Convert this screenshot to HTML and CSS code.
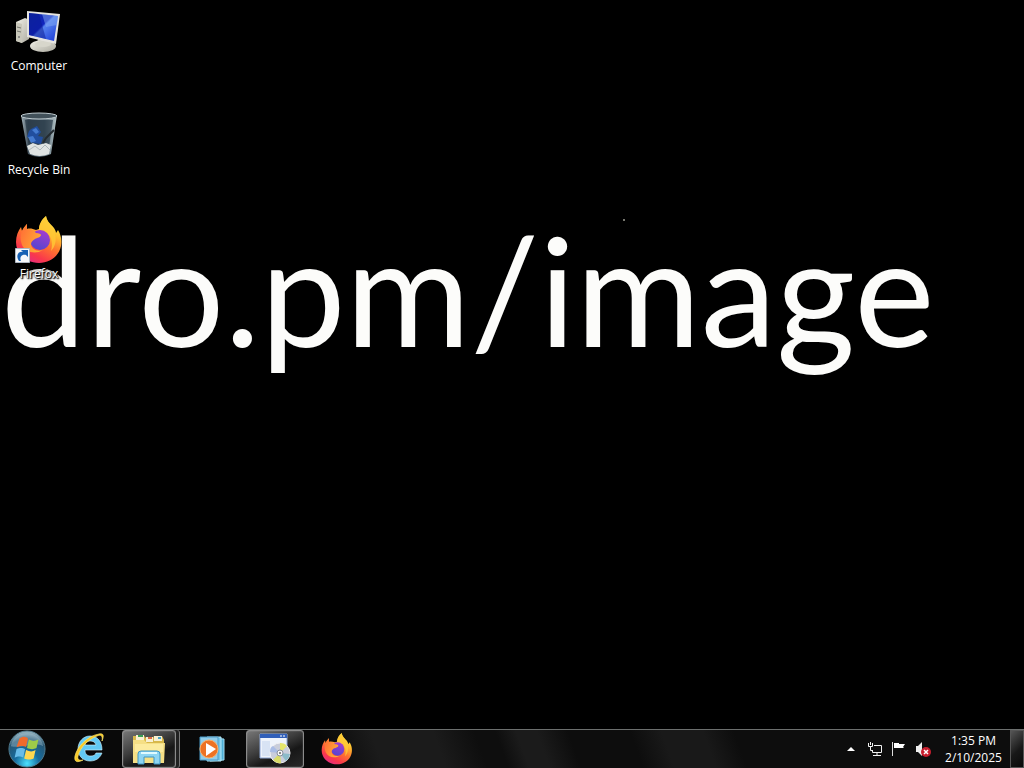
FILE: index.html
```html
<!DOCTYPE html>
<html lang="en">
<head>
<meta charset="utf-8">
<meta name="viewport" content="width=device-width, initial-scale=1">
<title>Desktop</title>
<link rel="stylesheet" href="styles.css">
</head>
<body>
<svg class="defs" aria-hidden="true">
  <defs>
    <linearGradient id="ffBody" x1=".8" y1="0" x2=".25" y2="1">
      <stop offset="0" stop-color="#fff44b"/><stop offset=".3" stop-color="#ffbd2e"/><stop offset=".55" stop-color="#ff7130"/><stop offset=".8" stop-color="#f9384c"/><stop offset="1" stop-color="#e42a85"/>
    </linearGradient>
    <linearGradient id="ffGlobe" x1=".7" y1="0" x2=".3" y2="1">
      <stop offset="0" stop-color="#a53bd0"/><stop offset="1" stop-color="#5246cf"/>
    </linearGradient>
    <linearGradient id="ffHead" x1="0" y1="0" x2="1" y2=".5">
      <stop offset="0" stop-color="#ff6a36"/><stop offset="1" stop-color="#ffad35"/>
    </linearGradient>
    <symbol id="firefox" viewBox="0 0 48 48">
      <path fill="url(#ffBody)" d="M31 0c1 6 5 8 8 12 1 2 2 3 2 5l2-3c3 5 4 10 3 16-2 10-11 17-22 17C11 47 1 38 1 26c0-6 2-11 5-15l1 4c1-3 3-5 5-7v5c3-1 6 0 9 1l3-1C24 8 27 3 31 0z"/>
      <path fill="#ffc936" d="M31 0c1 6 6 10 8 15 3 7 2 15-3 20 2-7 1-14-4-18-3-2-6-3-8-3 0-6 4-10 7-14z" opacity=".8"/>
      <circle cx="25" cy="24" r="10" fill="url(#ffGlobe)"/>
      <path fill="url(#ffHead)" d="M7 15l5-7v6c4-1 7 0 9 3 3 0 5 1 5 2 0 2-4 3-6 4-2 1-4 3-4 5 0 5 6 8 12 6-8 5-18 2-21-5-2-5-2-10 0-14z"/>
    </symbol>
  </defs>
</svg>

<main class="desktop">
  <div class="wallpaper" aria-hidden="true">
    <p class="wallpaper-text">dro.pm/image</p>
    <span class="speck"></span>
  </div>

  <nav class="shortcuts" aria-label="Desktop shortcuts">
    <button class="shortcut" type="button">
      <svg class="shortcut-icon" viewBox="0 0 48 48" aria-hidden="true">
        <defs>
          <linearGradient id="screen" x1="0" y1="0" x2="1" y2="1"><stop offset="0" stop-color="#102ca8"/><stop offset=".45" stop-color="#1024bd"/><stop offset=".5" stop-color="#5784ef"/><stop offset="1" stop-color="#1735d4"/></linearGradient>
          <linearGradient id="plastic" x1="0" x2="1" y2="1"><stop offset="0" stop-color="#f3f2e9"/><stop offset="1" stop-color="#aaa99e"/></linearGradient>
        </defs>
        <path d="M1 14l9-4 5 2-1 19-7 4-6-2z" fill="url(#plastic)"/>
        <path d="M1 14l6 2v19l-6-2z" fill="#c8c7ba"/>
        <path d="M2 19l4 1M2 23l4 1" stroke="#75766f"/>
        <circle cx="4" cy="29" r="1" fill="#777"/>
        <path d="M23 30h9l1 8H22z" fill="#b9b8ac"/>
        <ellipse cx="28" cy="38" rx="13" ry="6" fill="url(#plastic)"/>
        <ellipse cx="28" cy="36" rx="8" ry="3" fill="#d7d6cb"/>
        <path d="M12 3l33 3-4 30-29-7z" fill="#e5e4df"/>
        <path d="M14 5l29 3-4 25-25-6z" fill="url(#screen)"/>
        <path d="M14 5l10 1 7 25-17-4z" fill="#071790" opacity=".5"/>
        <path d="M27 6l16 2-1 9-11 2z" fill="#82aaf4" opacity=".5"/>
      </svg>
      <span class="shortcut-label">Computer</span>
    </button>
    <button class="shortcut" type="button">
      <svg class="shortcut-icon" viewBox="0 0 48 48" aria-hidden="true">
        <defs><linearGradient id="glass"><stop offset="0" stop-color="#a7b7be"/><stop offset=".2" stop-color="#42515d"/><stop offset=".65" stop-color="#546772"/><stop offset="1" stop-color="#b7c6ca"/></linearGradient></defs>
        <path d="M6 3h36l-6 39q-12 6-23 0z" fill="url(#glass)"/>
        <path d="M10 8h28l-4 27H14z" fill="#243443" opacity=".7"/>
        <path d="M12 34l6-3 5 2 8-2 5 2-2 9q-9 4-19 0z" fill="#dfe3e2"/>
        <path d="M14 38l6-4 5 4 5-5 5 5" stroke="#aeb8bb" fill="none"/>
        <path d="M16 17l6-3 4 6-3 4 5 1-2 7-8-1 1-5-7-1 2-6z" fill="#214e9e"/>
        <path d="M17 18l4-2 3 4-3 2zM13 25l5-1 3 5-5 2z" fill="#447bd0"/>
        <path d="M39 18l-8 8-3 5" stroke="#242b30" stroke-width="2" fill="none"/>
        <ellipse cx="24" cy="4" rx="18" ry="3" fill="#42515a" stroke="#bfcbd0" stroke-width="1"/>
      </svg>
      <span class="shortcut-label">Recycle Bin</span>
    </button>
    <button class="shortcut" type="button">
      <svg class="shortcut-icon" viewBox="0 0 48 48" aria-hidden="true">
        <use href="#firefox" width="48" height="48"/>
        <path d="M.5 32.500h14v14H.5z" fill="#f5f7fa" stroke="#aeb8c4"/>
        <path d="M4 45c-4-6 0-10 4-9l-2-2h7v7l-2-2c-4-1-7 2-5 6z" fill="#1761b4"/>
      </svg>
      <span class="shortcut-label">Firefox</span>
    </button>
  </nav>
</main>

<footer class="taskbar">
  <button class="start" type="button" aria-label="Start">
    <svg viewBox="0 0 40 40" aria-hidden="true">
      <defs><radialGradient id="orb" cx=".5" cy=".9" r=".85"><stop offset="0" stop-color="#4be2ff"/><stop offset=".4" stop-color="#176b9d"/><stop offset=".8" stop-color="#265673"/><stop offset="1" stop-color="#8cabb9"/></radialGradient></defs>
      <circle cx="20" cy="20" r="19" fill="url(#orb)" stroke="#527c8f"/>
      <path d="M3 17C6-1 34-1 37 17 26 12 15 20 3 17z" fill="#bed8e2" opacity=".35"/>
      <path d="M12 9c4-3 7-2 9 0l-2 9c-4-2-6-1-10 0z" fill="#f06a2c"/>
      <path d="M22 10c4 2 6 2 10 0l-2 9c-4 2-7 1-10 0z" fill="#9dcb49"/>
      <path d="M9 20c4-2 7-1 9 0l-2 9c-4-2-6-1-9 0z" fill="#68bce9"/>
      <path d="M19 21c4 2 7 2 10 0l-2 9c-4 2-7 1-10 0z" fill="#ffd750"/>
    </svg>
  </button>
  <div class="tasks">
    <button class="task" type="button" aria-label="Internet Explorer">
      <svg viewBox="0 0 32 32" aria-hidden="true">
        <path d="M29 17H12c0 4 2 6 6 6 3 0 4-1 5-3h6c-2 5-6 8-12 8-7 0-12-5-12-12S10 3 17 3c8 0 12 6 12 14zm-6-5c-1-3-3-4-6-4s-5 2-5 4z" fill="#62c9f4" stroke="#d4f4ff" stroke-width=".6"/>
        <path d="M29 8c2-5 2-8-3-7C14 3 4 14 2 23c-1 6 2 7 8 4-4 1-6-1-5-4C7 14 16 6 24 3c4-2 6 0 5 5z" fill="#f9c927" stroke="#ffe76b" stroke-width=".7"/>
      </svg>
    </button>
    <button class="task task-open task-stacked" type="button" aria-label="Windows Explorer">
      <svg viewBox="0 0 32 32" aria-hidden="true">
        <path d="M0 3h11l2 2h7l1-2h8l2 4v22H0z" fill="#d8b84b"/>
        <path d="M3 2h8v5H3zM13 4h7v5h-7zM21 3h8v5h-8z" fill="#f7efd1"/>
        <path d="M5 3h5" stroke="#389e54" stroke-width="2"/><path d="M15 5h4" stroke="#d96845" stroke-width="2"/><path d="M25 5h3" stroke="#48a5c5" stroke-width="2"/>
        <path d="M0 7h11l3 3h18l-1 20H0z" fill="#f5df85"/>
        <path d="M2 11h28v8H2z" fill="#ffefa8" opacity=".7"/>
        <path d="M5 31V21q0-3 3-3h16q3 0 3 3v10h-6v-7H11v7z" fill="#8ed5f2" stroke="#3d96c4"/>
        <path d="M8 20h16" stroke="#e0fbff" stroke-width="2"/>
      </svg>
    </button>
    <button class="task" type="button" aria-label="Windows Media Player">
      <svg viewBox="0 0 32 32" aria-hidden="true">
        <path d="M13 5l14 1v21l-14 1z" fill="#4faed5" stroke="#a1ddf2"/>
        <path d="M10 4h14v24H10z" fill="#75c6e8" stroke="#b6e9f8"/>
        <path d="M3 4h18v23H3z" fill="#91cdea" stroke="#4a9bc8"/>
        <circle cx="12" cy="16" r="9" fill="#ed7223" stroke="#f9b16a"/>
        <path d="M9 10l10 6-10 7z" fill="#fff"/>
      </svg>
    </button>
    <button class="task task-open" type="button" aria-label="Setup">
      <svg viewBox="0 0 32 32" aria-hidden="true">
        <path d="M1 1h27v24H1z" fill="#eef3fb" stroke="#8da6d5"/>
        <path d="M1 1h27v4H1z" fill="#315fb9"/><path d="M21 3h2m1 0h2" stroke="#fff"/>
        <path d="M3 8h8v15H3z" fill="#d8e3f4"/>
        <circle cx="21" cy="20" r="10" fill="#c9cddb" stroke="#f0f0f2"/>
        <path d="M21 20V10q5 0 7 3z" fill="#e5e66c"/><path d="M21 20l-7 7q5 4 8 3z" fill="#d8db67"/><path d="M21 20l-10-1q0-5 3-6z" fill="#a9bce5"/><path d="M21 20l10 1q-1 5-4 7z" fill="#8bbbc9"/>
        <circle cx="21" cy="20" r="3" fill="#f6f6f6" stroke="#888fa0"/><circle cx="21" cy="20" r="1" fill="#666"/>
      </svg>
    </button>
    <button class="task" type="button" aria-label="Firefox">
      <svg viewBox="0 0 48 48" aria-hidden="true"><use href="#firefox" width="48" height="48"/></svg>
    </button>
  </div>
  <div class="tray">
    <button class="tray-button" type="button" aria-label="Show hidden icons"><svg viewBox="0 0 16 16" aria-hidden="true"><path d="M4 10h8L8 6z" fill="#fff"/></svg></button>
    <button class="tray-button" type="button" aria-label="Network"><svg viewBox="0 0 16 16" aria-hidden="true"><path d="M7 4.500h7.500v7H5.500V9M6 14.500h8M10 12v2M1.500 2v3.500h4V2M3.500 1v3M3.500 6v3.500h2" fill="none" stroke="#f2f2f2"/></svg></button>
    <button class="tray-button" type="button" aria-label="Action Center"><svg viewBox="0 0 16 16" aria-hidden="true"><path d="M1.500 1v14" stroke="#ddd"/><path d="M3 2h5v1h6l-2 3 1 1H8V7H3z" fill="#fff"/></svg></button>
    <button class="tray-button" type="button" aria-label="Volume muted"><svg viewBox="0 0 16 16" aria-hidden="true"><path d="M1 5h2l4-4v14l-4-4H1z" fill="#eee"/><circle cx="11" cy="11" r="5" fill="#c81e2e"/><path d="M9 9l4 4m0-4l-4 4" stroke="#fff" stroke-width="1.500"/></svg></button>
  </div>
  <button class="clock" type="button"><time datetime="13:35">1:35 PM</time><time datetime="2025-02-10">2/10/2025</time></button>
  <button class="show-desktop" type="button" aria-label="Show desktop"></button>
</footer>
</body>
</html>
```
FILE: styles.css
```css
* { box-sizing: border-box; }

body {
  display: flex;
  flex-direction: column;
  min-height: 100vh;
  margin: 0;
  overflow: hidden;
  background: #000;
  color: #fff;
  font-family: "Open Sans", "Noto Sans", sans-serif;
  font-size: 12px;
}

button {
  padding: 0;
  border: 0;
  background: none;
  color: inherit;
  font: inherit;
}

svg { display: block; }

.defs {
  position: absolute;
  width: 0;
  height: 0;
}

.desktop {
  position: relative;
  flex: 1;
}

.wallpaper {
  position: absolute;
  inset: 0;
  overflow: hidden;
}

.wallpaper-text {
  margin: 0;
  padding: 218px 0 0 1px;
  color: #fcfcfa;
  font-family: Lato, "Open Sans", sans-serif;
  font-size: 152px;
  line-height: 140px;
  white-space: nowrap;
}

.speck {
  position: absolute;
  top: 219px;
  left: 623px;
  width: 2px;
  height: 2px;
  background: #77776f;
}

.shortcuts {
  position: relative;
  display: flex;
  flex-direction: column;
  align-items: flex-start;
  gap: 32px;
  padding: 8px 0 0 2px;
}

.shortcut {
  display: flex;
  flex-direction: column;
  align-items: center;
  gap: 2px;
  width: 74px;
  height: 72px;
}

.shortcut-icon {
  width: 48px;
  height: 48px;
}

.shortcut-label {
  line-height: 16px;
  text-shadow: 1px 1px 2px #000, 0 0 2px #000, 1px 1px 1px #000;
  white-space: nowrap;
}

.taskbar {
  display: flex;
  align-items: stretch;
  height: 39px;
  border-top: 1px solid #6c6f6e;
  background: linear-gradient(70deg, #090909 0 32%, #1b1b1b 37% 43%, #0e0e0e 47% 49%, #1b1b1b 51% 53%, #0d0d0d 56% 62%, #191919 65% 69%, #0d0d0d 72%);
}

.start {
  width: 54px;
}

.start svg {
  width: 38px;
  height: 38px;
  margin: 0 auto;
}

.tasks {
  display: flex;
  flex: 1;
  gap: 4px;
  padding-left: 6px;
}

.task {
  display: grid;
  place-items: center;
  width: 58px;
  border-radius: 3px;
}

.task svg {
  width: 32px;
  height: 32px;
}

.task-open {
  border: 1px solid #8b8b8b;
  background: linear-gradient(155deg, #777 0, #3d3d3d 42%, #171717 65%, #282828);
  box-shadow: inset 0 0 1px #ccc;
}

.task-stacked {
  width: 54px;
  margin-right: 4px;
  box-shadow: inset 0 0 1px #ccc, 3px 0 #222, 4px 0 #777;
}

.tray {
  display: flex;
  align-items: center;
  gap: 8px;
}

.tray-button svg {
  width: 16px;
  height: 16px;
}

.clock {
  display: flex;
  flex-direction: column;
  justify-content: center;
  align-items: center;
  width: 79px;
  padding-left: 6px;
  line-height: 17px;
}

.show-desktop {
  width: 14px;
  border: 1px solid #555;
  background: linear-gradient(135deg, #555, #181818 55%, #090909);
}
```
